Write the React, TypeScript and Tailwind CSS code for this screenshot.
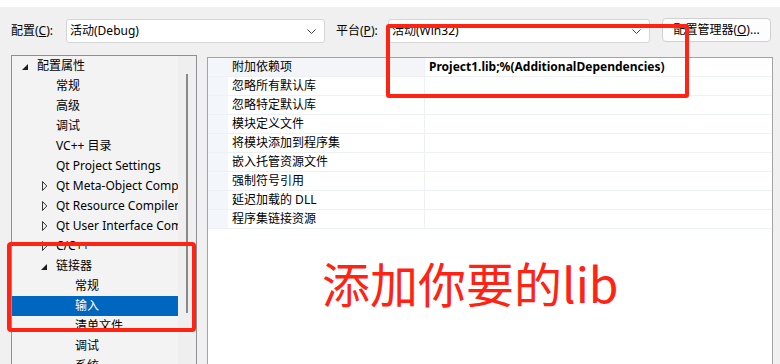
import React from 'react'

const FONT = "font-['Noto_Sans','Noto_Sans_CJK_SC',sans-serif]"

type Node = { label: string; level: number; arrow?: 'open' | 'closed'; selected?: boolean }

const TREE: Node[] = [
  { label: '配置属性', level: 0, arrow: 'open' },
  { label: '常规', level: 1 },
  { label: '高级', level: 1 },
  { label: '调试', level: 1 },
  { label: 'VC++ 目录', level: 1 },
  { label: 'Qt Project Settings', level: 1 },
  { label: 'Qt Meta-Object Compiler', level: 1, arrow: 'closed' },
  { label: 'Qt Resource Compiler', level: 1, arrow: 'closed' },
  { label: 'Qt User Interface Compiler', level: 1, arrow: 'closed' },
  { label: 'C/C++', level: 1, arrow: 'closed' },
  { label: '链接器', level: 1, arrow: 'open' },
  { label: '常规', level: 2 },
  { label: '输入', level: 2, selected: true },
  { label: '清单文件', level: 2 },
  { label: '调试', level: 2 },
  { label: '系统', level: 2 },
]

const PROPS = [
  '附加依赖项',
  '忽略所有默认库',
  '忽略特定默认库',
  '模块定义文件',
  '将模块添加到程序集',
  '嵌入托管资源文件',
  '强制符号引用',
  '延迟加载的 DLL',
  '程序集链接资源',
]

// indent per tree level
const PAD = ['pl-[6px]', 'pl-[25px]', 'pl-[44px]']

function Chevron() {
  return (
    <svg width="9" height="5" viewBox="0 0 9 5" className="shrink-0">
      <path d="M0.5 0.5 L4.5 4.5 L8.5 0.5" fill="none" stroke="#444" strokeWidth="1" />
    </svg>
  )
}

function Combo({ text, w }: { text: string; w: string }) {
  return (
    <div className={`${w} h-[24px] bg-white border border-[#d5d5d5] rounded-[3px] flex items-center justify-between pl-[3px] pr-[8px]`}>
      <span className="text-[12px] text-black">{text}</span>
      <Chevron />
    </div>
  )
}

function Arrow({ kind }: { kind?: 'open' | 'closed' }) {
  if (kind === 'open')
    return (
      <svg width="7" height="7" viewBox="0 0 7 7" className="ml-[4px] mt-[2px]">
        <polygon points="6,0 6,6 0,6" fill="#1b1b1b" />
      </svg>
    )
  if (kind === 'closed')
    return (
      <svg width="6" height="10" viewBox="0 0 6 10" className="ml-[5px]">
        <polygon points="0.5,0.5 4.8,5 0.5,9.5" fill="none" stroke="#333" strokeWidth="1" />
      </svg>
    )
  return null
}

export default function App() {
  return (
    <div className={`relative w-[780px] h-[364px] overflow-hidden bg-[#f0f0f0] text-[12px] text-black ${FONT}`}>
      <div className="h-[7px] bg-white" />

      {/* ── top bar ── */}
      <div className="flex items-center h-[24px] mt-[12px] pl-[11px]">
        <span className="w-[55px]">配置(<span className="underline">C</span>):</span>
        <Combo text="活动(Debug)" w="w-[259px]" />
        <span className="ml-[11px] w-[52px]">平台(<span className="underline">P</span>):</span>
        <Combo text="活动(Win32)" w="w-[262px]" />
        <button className="ml-[12px] w-[109px] h-[24px] -mt-[2px] bg-[#fdfdfd] border border-[#d0d0d0] rounded-[4px] text-[12px] text-black">
          配置管理器(<span className="underline">O</span>)...
        </button>
      </div>

      {/* ── panels ── */}
      <div className="flex items-start mt-[12px] pl-[11px]">
        {/* tree */}
        <div className="w-[186px] h-[320px] border border-[#8e8f94] bg-[#f3f3f3] flex">
          <div className="w-[166px] overflow-hidden">
            {TREE.map((n, i) => (
              <div
                key={i}
                className={`h-[20px] flex items-center whitespace-nowrap ${PAD[n.level]} ${n.selected ? 'bg-[#0067c0] text-white' : ''}`}
              >
                <div className="w-[19px] shrink-0 flex items-center">
                  <Arrow kind={n.arrow} />
                </div>
                <span>{n.label}</span>
              </div>
            ))}
          </div>
          <div className="flex-1 bg-[#efefef] flex justify-center pt-[18px]">
            <div className="w-[2px] h-[239px] bg-[#898989]" />
          </div>
        </div>

        {/* property grid */}
        <div className="ml-[10px] mt-[2px] w-[566px] h-[320px] border border-[#a3a3a3] bg-white">
          {PROPS.map((p, i) => (
            <div key={i} className="flex h-[19px] border-b border-[#edf1f6]">
              <div className="w-[20px] bg-[#f3f7fc]" />
              <div className={`w-[197px] pl-[4px] flex items-center border-r border-[#edf1f6] ${i === 0 ? 'bg-[#f3f5f8]' : ''}`}>
                {p}
              </div>
              <div className="flex-1 pl-[4px] flex items-center font-bold">
                {i === 0 ? 'Project1.lib;%(AdditionalDependencies)' : ''}
              </div>
            </div>
          ))}
        </div>
      </div>

      {/* ── red annotations ── */}
      <div className="absolute left-[386px] top-[24px] w-[303px] h-[74px] border-[4px] border-[#ff2314] rounded-[3px]" />
      <div className="absolute left-[7px] top-[242px] w-[189px] h-[90px] border-[4px] border-[#ff2314] rounded-[4px]" />
      <div className="absolute left-[322px] top-[258px] text-[48px] leading-none text-[#ff2314] font-['Noto_Sans_CJK_SC',sans-serif] whitespace-nowrap">
        添加你要的lib
      </div>
    </div>
  )
}
